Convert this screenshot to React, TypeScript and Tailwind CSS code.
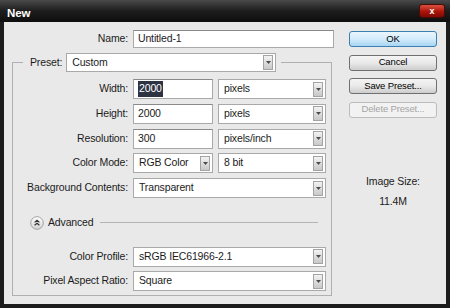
import React from "react"

const font = { fontFamily: '"Liberation Sans", Arial, sans-serif' }

function Arrow() {
  return (
    <div className="w-[10px] h-[15px] border border-[#a3a3a3] bg-gradient-to-b from-[#f3f3f3] to-[#c8c8c8] flex items-center justify-center">
      <svg width="5" height="3" viewBox="0 0 5 3">
        <path d="M0 0 L5 0 L2.5 3 Z" fill="#4a4a4a" />
      </svg>
    </div>
  )
}

type SelectProps = { value: string; w: string }
function Select({ value, w }: SelectProps) {
  return (
    <div className={`${w} h-[20px] border border-[#a9a9a9] bg-white flex items-center justify-between pl-[5px] pr-[2px]`}>
      <span>{value}</span>
      <Arrow />
    </div>
  )
}

function Input({ children, w }: { children: React.ReactNode; w: string }) {
  return (
    <div className={`${w} h-[20px] border border-[#a9a9a9] border-t-[#8a8a8a] bg-white flex items-center pl-[4px]`}>
      {children}
    </div>
  )
}

function Row({ label, children }: { label: string; children: React.ReactNode }) {
  return (
    <div className="flex items-center h-[20px]">
      <div className="w-[115px] text-right">{label}</div>
      <div className="ml-[5px] flex gap-[5px]">{children}</div>
    </div>
  )
}

function Button({ label, kind }: { label: string; kind?: "ok" | "off" }) {
  const look =
    kind === "ok"
      ? "border-[#3c7fb1] bg-gradient-to-b from-[#eaf6fd] via-[#d4ecfb] to-[#a6d5f3] text-black"
      : kind === "off"
      ? "border-[#b9bdc0] bg-[#f2f2f2] text-[#a5a5a5]"
      : "border-[#707070] bg-gradient-to-b from-[#f4f4f4] via-[#e9e9e9] to-[#cdcdcd] text-black"
  return (
    <div className={`h-[16px] w-[88px] rounded-[3px] border ${look} flex items-center justify-center text-[9.5px]`}>
      {label}
    </div>
  )
}

export default function App() {
  return (
    <div className="w-[450px] h-[308px] bg-[#1c1c1c] overflow-hidden text-[10.5px] tracking-[-0.15px] text-[#1b1b1b]" style={font}>
      <div className="h-[22px] flex items-start justify-between px-[7px] bg-gradient-to-b from-[#4a4a4a] via-[#1d1d1d] to-[#0e0e0e]">
        <span className="mt-[6px] leading-[14px] text-white font-bold text-[11.5px]">New</span>
        <div className="mt-[4px] -mr-[2px] w-[26px] h-[14px] rounded-[3px] border border-[#4a0a06] bg-gradient-to-b from-[#d9503f] via-[#b0160b] to-[#7e0a04] flex items-center justify-center text-white text-[9px] font-bold leading-none">
          x
        </div>
      </div>

      <div className="mx-[4px] h-[282px] bg-[#e9e9e9] flex pl-[8px] pt-[8px]">
        <div className="w-[322px] flex flex-col">
          <div className="flex items-center h-[18px]">
            <div className="w-[116px] text-right">Name:</div>
            <div className="ml-[5px] w-[201px] h-[18px] border border-[#a9a9a9] border-t-[#8a8a8a] bg-white flex items-center pl-[4px]">
              Untitled-1
            </div>
          </div>

          <fieldset className="mt-[5px] w-[320px] border border-[#b0b0b0] pb-[4px]">
            <legend className="ml-[10px] pl-[7px] pr-[5px]">
              <div className="flex items-center h-[19px] gap-[4px]">
                <span>Preset:</span>
                <div className="w-[210px] h-[19px] border border-[#a9a9a9] bg-white flex items-center justify-between pl-[5px] pr-[2px]">
                  <span>Custom</span>
                  <Arrow />
                </div>
              </div>
            </legend>

            <div className="flex flex-col pt-[7px] gap-[4.75px]">
              <Row label="Width:">
                <Input w="w-[80px]">
                  <span className="bg-[#2d3343] text-white px-[1px]">2000</span>
                </Input>
                <Select value="pixels" w="w-[108px]" />
              </Row>
              <Row label="Height:">
                <Input w="w-[80px]">2000</Input>
                <Select value="pixels" w="w-[108px]" />
              </Row>
              <Row label="Resolution:">
                <Input w="w-[80px]">300</Input>
                <Select value="pixels/inch" w="w-[108px]" />
              </Row>
              <Row label="Color Mode:">
                <Select value="RGB Color" w="w-[80px]" />
                <Select value="8 bit" w="w-[108px]" />
              </Row>
              <Row label="Background Contents:">
                <Select value="Transparent" w="w-[193px]" />
              </Row>

              <div className="mt-[13px] h-[14px] flex items-center pl-[17px] pr-[13px]">
                <svg width="14" height="14" viewBox="0 0 14 14">
                  <defs>
                    <linearGradient id="adv" x1="0" y1="0" x2="0" y2="1">
                      <stop offset="0" stopColor="#ffffff" />
                      <stop offset="1" stopColor="#d2d2d2" />
                    </linearGradient>
                  </defs>
                  <circle cx="7" cy="7" r="6.3" fill="url(#adv)" stroke="#9a9a9a" strokeWidth="0.9" />
                  <path d="M4.6 6.4 L7 4.3 L9.4 6.4 M4.6 9.3 L7 7.2 L9.4 9.3" fill="none" stroke="#333" strokeWidth="1.2" />
                </svg>
                <span className="ml-[4px]">Advanced</span>
                <div className="ml-[6px] flex-1 h-px bg-[#b4b4b4]" />
              </div>

              <div className="mt-[12px]">
                <Row label="Color Profile:">
                  <Select value="sRGB IEC61966-2.1" w="w-[193px]" />
                </Row>
              </div>
              <Row label="Pixel Aspect Ratio:">
                <Select value="Square" w="w-[193px]" />
              </Row>
            </div>
          </fieldset>
        </div>

        <div className="ml-[15px] w-[88px] flex flex-col items-center pt-[1px]">
          <div className="flex flex-col gap-[7.5px]">
            <Button label="OK" kind="ok" />
            <Button label="Cancel" />
            <Button label="Save Preset..." />
            <Button label="Delete Preset..." kind="off" />
          </div>
          <div className="mt-[57px] leading-[13px] text-center">Image Size:</div>
          <div className="mt-[7px] leading-[13px] text-center">11.4M</div>
        </div>
      </div>
    </div>
  )
}
